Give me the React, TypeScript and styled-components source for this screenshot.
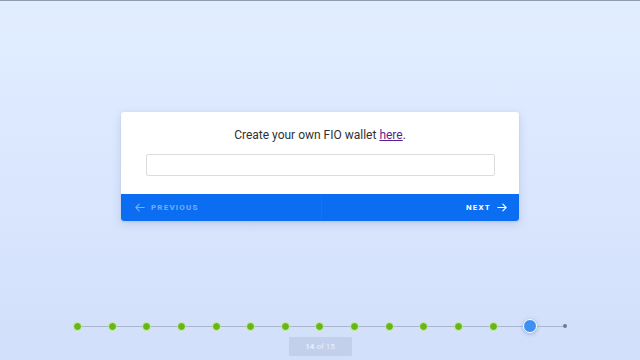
import React from "react";
import styled, { createGlobalStyle } from "styled-components";

const TOTAL = 15;
const CURRENT = 14;

const GlobalStyle = createGlobalStyle`
  html, body {
    margin: 0;
    padding: 0;
  }
  body {
    font-family: Roboto, "Liberation Sans", Arial, sans-serif;
  }
`;

const App = () => {
  const steps = Array.from({ length: TOTAL }, (_, i) => i + 1);

  return (
    <Page>
      <GlobalStyle />
      <Card>
        <CardBody>
          <Prompt>
            Create your own FIO wallet <a href="#here">here</a>.
          </Prompt>
          <Field type="text" />
        </CardBody>
        <CardFooter>
          <NavButton disabled>
            <Arrow viewBox="0 0 12 10">
              <path d="M11 5H1.5M5 1L1 5l4 4" />
            </Arrow>
            PREVIOUS
          </NavButton>
          <Divider />
          <NavButton $alignRight>
            NEXT
            <Arrow viewBox="0 0 12 10">
              <path d="M1 5h9.5M7 1l4 4-4 4" />
            </Arrow>
          </NavButton>
        </CardFooter>
      </Card>

      <Progress>
        <Steps>
          {steps.map((n) => (
            <React.Fragment key={n}>
              {n > 1 && <Connector />}
              <Dot $state={n < CURRENT ? "done" : n === CURRENT ? "current" : "todo"} />
            </React.Fragment>
          ))}
        </Steps>
        <Counter>
          <b>{CURRENT}</b> of {TOTAL}
        </Counter>
      </Progress>
    </Page>
  );
};

const Page = styled.div`
  width: 640px;
  height: 360px;
  box-sizing: border-box;
  border-top: 1px solid #8d9cae;
  background: linear-gradient(180deg, #e1edff 0%, #d9e5fd 60%, #d2dffa 100%);
  display: flex;
  flex-direction: column;
  align-items: center;
  padding-top: 111px;
  overflow: hidden;
`;

const Card = styled.div`
  width: 398px;
  border-radius: 3px;
  overflow: hidden;
  background: #fff;
  box-shadow: 0 3px 10px rgba(60, 90, 150, 0.18), 0 1px 2px rgba(60, 90, 150, 0.12);
`;

const CardBody = styled.div`
  display: flex;
  flex-direction: column;
  align-items: center;
  padding: 16px 24px 18px;
`;

const Prompt = styled.div`
  font-size: 12px;
  line-height: 15px;
  color: #2f3136;

  a {
    color: #5b1f91;
    text-decoration: underline;
  }
`;

const Field = styled.input`
  margin-top: 11px;
  width: 349px;
  height: 22px;
  box-sizing: border-box;
  border: 1px solid #dcdcdc;
  border-radius: 2px;
  background: #fff;
  outline: none;
`;

const CardFooter = styled.div`
  height: 27px;
  display: flex;
  align-items: stretch;
  background: #0b6ef2;
`;

const Divider = styled.div`
  width: 1px;
  background: rgba(255, 255, 255, 0.04);
`;

const NavButton = styled.button<{ $alignRight?: boolean }>`
  flex: 1;
  display: flex;
  align-items: center;
  justify-content: ${(p) => (p.$alignRight ? "flex-end" : "flex-start")};
  gap: 6px;
  padding: ${(p) => (p.$alignRight ? "0 12px 0 0" : "0 0 0 14px")};
  border: none;
  background: transparent;
  font-family: Roboto, "Liberation Sans", Arial, sans-serif;
  font-size: 8px;
  font-weight: 700;
  letter-spacing: 1.2px;
  color: #fff;
  cursor: pointer;

  &:disabled {
    color: rgba(255, 255, 255, 0.45);
    cursor: default;
  }
`;

const Arrow = styled.svg`
  width: 10px;
  height: 9px;
  fill: none;
  stroke: currentColor;
  stroke-width: 1.3;
  stroke-linecap: round;
  stroke-linejoin: round;
`;

const Progress = styled.div`
  margin-top: 98px;
  display: flex;
  flex-direction: column;
  align-items: center;
`;

const Steps = styled.div`
  width: 494px;
  height: 14px;
  display: flex;
  align-items: center;
`;

const Connector = styled.div`
  flex: 1;
  height: 1px;
  background: #aab6cf;
`;

const Dot = styled.div<{ $state: "done" | "current" | "todo" }>`
  flex: none;
  box-sizing: border-box;
  border-radius: 50%;
  width: ${(p) => (p.$state === "current" ? "14px" : p.$state === "done" ? "9px" : "4px")};
  height: ${(p) => (p.$state === "current" ? "14px" : p.$state === "done" ? "9px" : "4px")};
  background: ${(p) =>
    p.$state === "current" ? "#3e90f4" : p.$state === "done" ? "#66b818" : "#6f7a8c"};
  border: ${(p) =>
    p.$state === "current"
      ? "1.5px solid #ffffff"
      : p.$state === "done"
      ? "1.5px solid #d2edb4"
      : "none"};
  box-shadow: ${(p) => (p.$state === "current" ? "0 1px 4px rgba(40, 80, 160, 0.35)" : "none")};
`;

const Counter = styled.div`
  margin-top: 4px;
  width: 63px;
  height: 19px;
  display: flex;
  align-items: center;
  justify-content: center;
  background: #c3d0eb;
  border-radius: 1px;
  font-size: 8px;
  color: #e9eefa;

  b {
    font-weight: 700;
    margin-right: 2px;
  }
`;

export default App;
